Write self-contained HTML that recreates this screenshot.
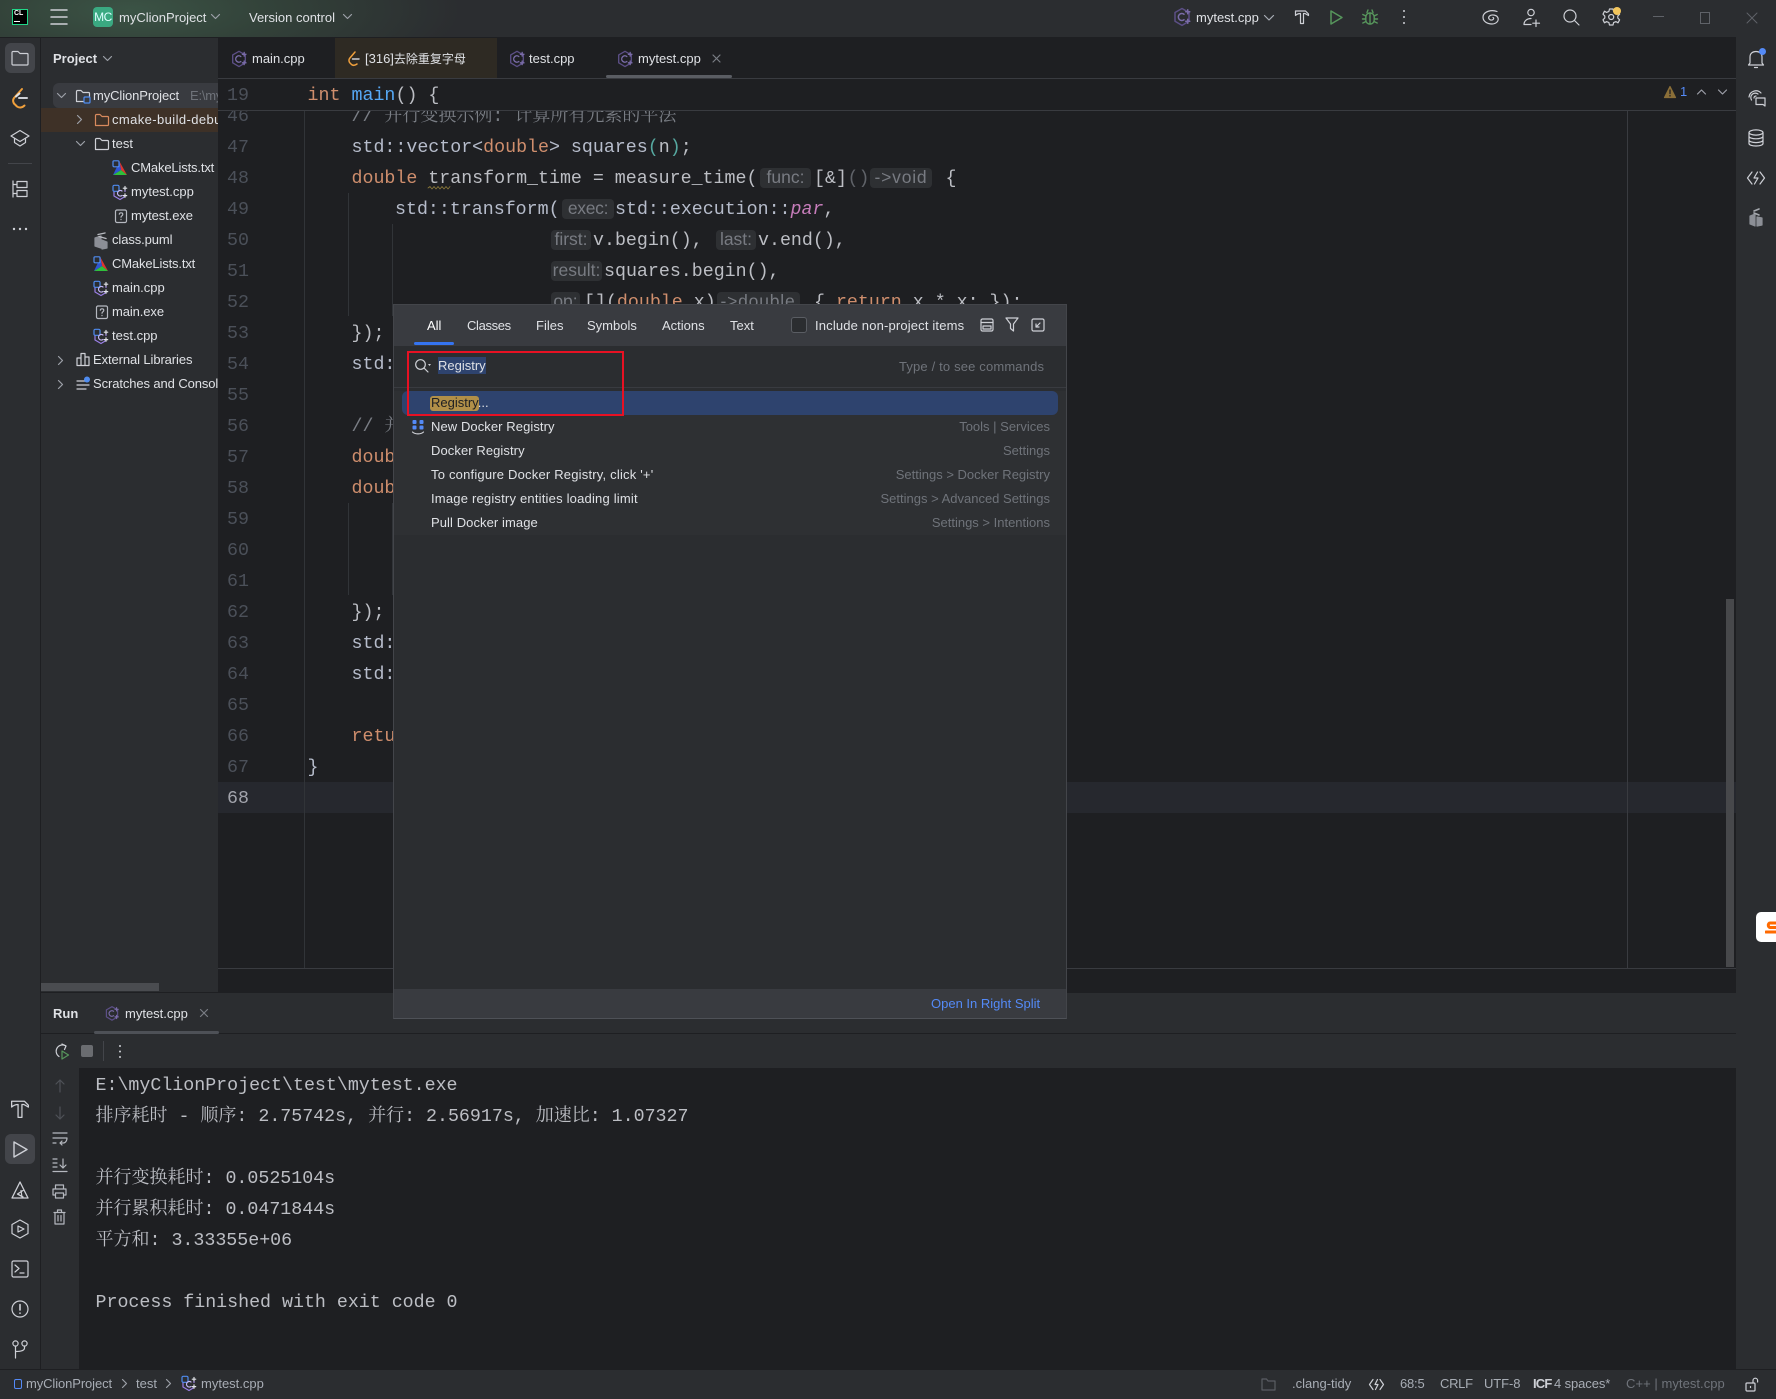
<!DOCTYPE html>
<html lang="en"><head><meta charset="utf-8"><title>myClionProject</title>
<style>
*{box-sizing:border-box}
html,body{margin:0;padding:0;width:1776px;height:1399px;overflow:hidden;background:#1e1f22}
body{position:relative;font:13px "Liberation Sans","Noto Sans CJK SC",sans-serif;color:#dfe1e5}
.b{position:absolute}
.t{position:absolute;white-space:pre;line-height:20px;height:20px}
svg{position:absolute;overflow:visible;fill:none;stroke:#ced0d6;stroke-width:1.2;stroke-linecap:round;stroke-linejoin:round}
.n,.c,pre{font-family:"Liberation Mono","Noto Serif CJK SC",monospace;font-size:18.3px}
.n{position:absolute;left:227px;height:31px;line-height:31px;color:#4b5059;margin-top:2px}
.c{position:absolute;white-space:pre;height:31px;line-height:31px;color:#b6bccb;margin-top:2px}
.k{color:#cf8e6d}.f{color:#56a8f5}.m{color:#7a7e85}.p{color:#bcbec4}
.z{font-size:18px}
.h{position:absolute;height:20px;text-align:center;background:#2e3033;border-radius:4px;color:#787b82;font:17.5px/19px "Liberation Sans",sans-serif;white-space:pre;z-index:1;overflow:hidden}
.r{position:absolute;left:431px;white-space:pre;line-height:20px;color:#dfe1e5;letter-spacing:.08px}
.q{position:absolute;left:700px;width:350px;text-align:right;white-space:pre;line-height:20px;color:#6f737a}
.tab{position:absolute;top:316px;line-height:20px;color:#dfe1e5}
.g{color:#6f737a}.d{color:#a8adb5}
</style></head><body>
<svg width="0" height="0" style="position:absolute"><defs>
<symbol id="cpp" viewBox="0 0 16 16"><path d="M8 1.2 13.6 4.4V11.4L8 14.7 2.4 11.4V4.4Z" stroke="#5c4f86"/><path d="M9.6 5.8A2.8 2.8 0 1 0 9.6 10.2" stroke="#7a6ca8"/><path d="M12.6 2.2v3.2M11 3.8h3.2M12.6 9.8V13M11 11.4h3.2" stroke="#7a6ca8"/></symbol>
<symbol id="cppm" viewBox="0 0 16 16"><path d="M2 7V11.5L8 15 13 12M13 7V5" stroke="#9a7fe6"/><rect x="1" y=".8" width="6" height="6" rx="1.2" stroke="#4f8cf0" fill="none"/><path d="M10 6.5A2.8 2.8 0 1 0 10 11" stroke="#c5b7f5"/><path d="M13 2v3.4M11.3 3.7h3.4M13 9.4v3.4M11.3 11.1h3.4" stroke="#dfe1e5"/></symbol>
<symbol id="cm" viewBox="0 0 16 16"><path d="M7.5 1.5 15 15 9 10Z" fill="#e0342e" stroke="none"/><path d="M1 15 9 10 15 15Z" fill="#2fbf3c" stroke="none"/><path d="M7.5 1.5 9 10 1 15Z" fill="#2f55d4" stroke="none"/><rect x="1" y=".8" width="6" height="6" rx="1" stroke="#4f8cf0" fill="#2b2d30"/></symbol>
<symbol id="exe" viewBox="0 0 16 16"><rect x="2.5" y="2" width="11" height="12.5" rx="1.5" stroke="#b5b8bf"/><path d="M6.3 6.2C6.5 4.3 9.8 4.4 9.8 6.3 9.8 7.8 8 7.8 8 9.2M8 11.3v.3" stroke="#b5b8bf"/></symbol>
<symbol id="fold" viewBox="0 0 16 16"><path d="M1.5 13.5V3.5a1 1 0 0 1 1-1H6L8 4.5H13.5a1 1 0 0 1 1 1V12.5a1 1 0 0 1-1 1Z"/></symbol>
</defs></svg>

<!-- Title bar -->
<div class="b" style="left:0;top:0;width:1776px;height:37px;background:#2b2d30"></div>
<div class="b" style="left:0;top:0;width:620px;height:37px;background:radial-gradient(ellipse 330px 90px at 130px 10px,#3b5345 0%,#33433a 40%,rgba(43,45,48,0) 100%)"></div>
<div class="b" style="left:12px;top:9px;width:16px;height:16px;background:#000;border:1px solid #21d789"></div>
<div class="t" style="left:14px;top:6px;font:bold 7px/16px 'Liberation Sans';color:#fff;height:16px">CL</div>
<div class="b" style="left:14px;top:21px;width:6px;height:1px;background:#fff"></div>
<svg style="left:51px;top:7px" width="16" height="20"><path d="M0 3H16M0 10H16M0 17H16" stroke="#ced0d6" stroke-width="1.5"/></svg>
<div class="b" style="left:93px;top:7px;width:20px;height:20px;border-radius:4px;background:#3aa981;color:#dff;font:12px/20px 'Liberation Sans';text-align:center;letter-spacing:-.4px">MC</div>
<div class="t" style="left:119px;top:8px;color:#dfe1e5">myClionProject</div>
<svg style="left:211px;top:14px" width="9" height="6"><path d="M.5 .5 4.5 4.5 8.5 .5" stroke="#9da0a8"/></svg>
<div class="t" style="left:249px;top:8px;color:#dfe1e5">Version control</div>
<svg style="left:343px;top:14px" width="9" height="6"><path d="M.5 .5 4.5 4.5 8.5 .5" stroke="#9da0a8"/></svg>
<svg style="left:1172px;top:7px" width="20" height="20"><use href="#cpp"/></svg>
<div class="t" style="left:1196px;top:8px;color:#dfe1e5">mytest.cpp</div>
<svg style="left:1264px;top:15px" width="10" height="6"><path d="M.5 .5 5 5 9.5 .5" stroke="#a8adb5"/></svg>
<svg style="left:1295px;top:10px" width="14" height="14"><path d="M.5 1H10.5L13.5 4V5.5L10 3.5H8.5V13.5H5.5V3.5C3.5 3.5 2 4 .5 5.5Z"/></svg>
<svg style="left:1330px;top:10px" width="13" height="15"><path d="M1 1 12 7.5 1 14Z" stroke="#57965c" stroke-width="1.5"/></svg>
<svg style="left:1362px;top:9px" width="16" height="16"><g stroke="#57965c" stroke-width="1.4"><rect x="3.8" y="4" width="8.4" height="11" rx="4"/><path d="M8 4V15M5 3.5 6 1M11 3.5 10 1M.8 5.5 3.8 7M15.2 5.5 12.2 7M.5 10H3.5M15.5 10H12.5M.8 14 4 12.5M15.2 14 12 12.5"/></g></svg>
<svg style="left:1402px;top:9px" width="4" height="16"><circle cx="2" cy="2" r="1" fill="#ced0d6" stroke="none"/><circle cx="2" cy="8" r="1" fill="#ced0d6" stroke="none"/><circle cx="2" cy="14" r="1" fill="#ced0d6" stroke="none"/></svg>
<svg style="left:1482px;top:9px" width="18" height="16" stroke-width="1.4"><path d="M15 2.5C10 .5 1.5 2 1 8 1 13 6 15 10 15 14 15 17 12 16 9 15 6 10 5 7.5 7 5.5 9 7.5 11.5 10 11 12 10.5 12 9 11 8.5"/></svg>
<svg style="left:1523px;top:8px" width="18" height="19"><circle cx="8" cy="4.5" r="3.2"/><path d="M1 16.5C1 13 4 10.5 8 10.5M1 16.5H8M13 12V18.5M9.8 15.2H16.5"/></svg>
<svg style="left:1563px;top:9px" width="17" height="17" stroke-width="1.3"><circle cx="7" cy="7" r="6"/><path d="M11.5 11.5 16 16"/></svg>
<svg style="left:1603px;top:8px" width="18" height="18"><path d="M6.5 1H10L10.6 3.4 13 4.4 15 3.2 16.6 6.2 14.8 8 14.8 10 16.6 11.8 15 14.8 13 13.6 10.6 14.6 10 17H6.5L5.9 14.6 3.5 13.6 1.5 14.8 0 11.8 1.8 10 1.8 8 0 6.2 1.5 3.2 3.5 4.4 5.9 3.4Z"/><circle cx="8.2" cy="9" r="2.5"/></svg>
<div class="b" style="left:1613px;top:7px;width:8px;height:8px;border-radius:50%;background:#f2c55c"></div>
<div class="b" style="left:1653px;top:16px;width:11px;height:1px;background:#5f6268"></div>
<div class="b" style="left:1700px;top:12px;width:10px;height:12px;border:1px solid #5f6268"></div>
<svg style="left:1746px;top:12px" width="12" height="12"><path d="M1 1 11 11M11 1 1 11" stroke="#5f6268" stroke-width="1"/></svg>

<!-- Left strip + project panel -->
<div class="b" style="left:0;top:37px;width:41px;height:1332px;background:#2b2d30;border-right:1px solid #1e1f22"></div>
<div class="b" style="left:41px;top:37px;width:177px;height:955px;background:#2b2d30"></div>
<div class="b" style="left:0;top:37px;width:1776px;height:1px;background:#1e1f22"></div>
<div class="b" style="left:5px;top:43px;width:30px;height:30px;border-radius:6px;background:#43454a"></div>
<svg style="left:11px;top:50px" width="18" height="16" stroke-width="1.3"><path d="M1 14V2.5A1 1 0 0 1 2 1.5H7L9 3.5H16A1 1 0 0 1 17 4.5V14A1 1 0 0 1 16 15H2A1 1 0 0 1 1 14Z"/></svg>
<svg style="left:12px;top:88px" width="17" height="20"><path d="M10 1 2 10C.5 12 1 15 3 16.5L5 18.5C7 20 10 20 12.5 17.5" stroke="#f0a03c" stroke-width="2"/><path d="M7 10H15" stroke="#ced0d6" stroke-width="2"/><path d="M4 8.5 7.5 5.5" stroke="#dfe1e5" stroke-width="2"/></svg>
<svg style="left:10px;top:129px" width="20" height="18"><path d="M10 1.5 19 7 10 12.5 1 7ZM4.5 9.5V13.5L10 17 15.5 13.5V9.5"/></svg>
<div class="b" style="left:8px;top:163px;width:24px;height:1px;background:#43454a"></div>
<svg style="left:12px;top:180px" width="16" height="18"><path d="M1 1V17M5 1.5H15V7.5H5ZM5 10.5H15V16.5H5ZM1 4.5H5M1 13.5H5"/></svg>
<svg style="left:12px;top:227px" width="16" height="4"><circle cx="2" cy="2" r="1.2" fill="#ced0d6" stroke="none"/><circle cx="8" cy="2" r="1.2" fill="#ced0d6" stroke="none"/><circle cx="14" cy="2" r="1.2" fill="#ced0d6" stroke="none"/></svg>

<svg style="left:11px;top:1100px" width="18" height="18" viewBox="0 0 14 14"><path d="M.5 1H10.5L13.5 4V5.5L10 3.5H8.5V13.5H5.5V3.5C3.5 3.5 2 4 .5 5.5Z" stroke-width="1"/></svg>
<div class="b" style="left:5px;top:1134px;width:30px;height:30px;border-radius:6px;background:#43454a"></div>
<svg style="left:13px;top:1141px" width="15" height="17"><path d="M1 1 14 8.5 1 16Z" stroke-width="1.4"/></svg>
<svg style="left:11px;top:1181px" width="18" height="18"><path d="M9 1 17 17H1ZM12 9.5 6.5 13 12 16" stroke-width="1.3"/><path d="M10 9.5 11 16" /></svg>
<svg style="left:11px;top:1219px" width="18" height="20"><path d="M9 1 17 5.5V14.5L9 19 1 14.5V5.5Z"/><path d="M7 7 13 10 7 13Z"/></svg>
<svg style="left:11px;top:1260px" width="18" height="18"><rect x="1" y="1" width="16" height="16" rx="1.5"/><path d="M4 5 8 8.5 4 12M9 13H13"/></svg>
<svg style="left:11px;top:1300px" width="18" height="18"><circle cx="9" cy="9" r="8"/><path d="M9 4.5V10M9 13V13.3" stroke-width="1.6"/></svg>
<svg style="left:12px;top:1340px" width="16" height="19"><circle cx="3.5" cy="3.5" r="2.6"/><circle cx="12.5" cy="3.5" r="2.6"/><path d="M3.5 6V18M12.5 6V8C12.5 10 10 11.5 3.5 11.5"/></svg>

<!-- Project panel content -->
<div class="t" style="left:53px;top:49px;font-weight:bold;color:#dfe1e5">Project</div>
<svg style="left:103px;top:56px" width="9" height="6"><path d="M.5 .5 4.5 4.5 8.5 .5" stroke="#9da0a8"/></svg>
<div class="b" style="left:53px;top:83px;width:165px;height:25px;background:#393b40;border-radius:6px 0 0 6px"></div>
<div class="b" style="left:41px;top:108px;width:177px;height:24px;background:#3e3127"></div>
<div class="b" style="left:41px;top:84px;width:177px;height:310px;overflow:hidden">
<div class="t" style="left:52px;top:2px;color:#dfe1e5;letter-spacing:-.1px">myClionProject</div>
<div class="t" style="left:149px;top:2px;color:#6f737a;letter-spacing:-.2px">E:\myClionProject</div>
<div class="t" style="left:71px;top:26px;letter-spacing:.4px">cmake-build-debug</div>
<div class="t" style="left:71px;top:50px">test</div>
<div class="t" style="left:90px;top:74px;letter-spacing:-.15px">CMakeLists.txt</div>
<div class="t" style="left:90px;top:98px">mytest.cpp</div>
<div class="t" style="left:90px;top:122px;letter-spacing:-.1px">mytest.exe</div>
<div class="t" style="left:71px;top:146px;letter-spacing:-.1px">class.puml</div>
<div class="t" style="left:71px;top:170px;letter-spacing:-.15px">CMakeLists.txt</div>
<div class="t" style="left:71px;top:194px">main.cpp</div>
<div class="t" style="left:71px;top:218px;letter-spacing:-.1px">main.exe</div>
<div class="t" style="left:71px;top:242px">test.cpp</div>
<div class="t" style="left:52px;top:266px;letter-spacing:-.1px">External Libraries</div>
<div class="t" style="left:52px;top:290px;letter-spacing:-.1px">Scratches and Consoles</div>
</div>
<!-- tree chevrons and icons -->
<svg style="left:57px;top:93px" width="9" height="6"><path d="M.5 .5 4.5 4.5 8.5 .5" stroke="#9da0a8"/></svg>
<svg style="left:77px;top:115px" width="6" height="9"><path d="M.5 .5 4.5 4.5 .5 8.5" stroke="#9da0a8"/></svg>
<svg style="left:76px;top:141px" width="9" height="6"><path d="M.5 .5 4.5 4.5 8.5 .5" stroke="#9da0a8"/></svg>
<svg style="left:58px;top:356px" width="6" height="9"><path d="M.5 .5 4.5 4.5 .5 8.5" stroke="#9da0a8"/></svg>
<svg style="left:58px;top:380px" width="6" height="9"><path d="M.5 .5 4.5 4.5 .5 8.5" stroke="#9da0a8"/></svg>
<svg style="left:75px;top:88px" width="16" height="16"><use href="#fold"/><rect x="9" y="9" width="6" height="6" rx="1" stroke="#4f8cf0" fill="#393b40"/></svg>
<svg style="left:94px;top:112px" width="16" height="16"><path d="M1.5 13.5V3.5a1 1 0 0 1 1-1H6L8 4.5H13.5a1 1 0 0 1 1 1V12.5a1 1 0 0 1-1 1Z" stroke="#d98a5d"/></svg>
<svg style="left:94px;top:136px" width="16" height="16"><use href="#fold"/></svg>
<svg style="left:112px;top:160px" width="16" height="16"><use href="#cm"/></svg>
<svg style="left:112px;top:184px" width="16" height="17"><use href="#cppm"/></svg>
<svg style="left:113px;top:208px" width="16" height="16"><use href="#exe"/></svg>
<svg style="left:94px;top:232px" width="15" height="18"><path d="M1 6 7 4 7 16 1 14ZM8 8 13 10V16L8 17Z" fill="#8c8f96" stroke="#8c8f96"/><path d="M4 2.5 11 1M5 4.5 12 6.5" stroke="#b8bac0" stroke-width="1.4"/></svg>
<svg style="left:93px;top:256px" width="16" height="16"><use href="#cm"/></svg>
<svg style="left:93px;top:280px" width="16" height="17"><use href="#cppm"/></svg>
<svg style="left:94px;top:304px" width="16" height="16"><use href="#exe"/></svg>
<svg style="left:93px;top:328px" width="16" height="17"><use href="#cppm"/></svg>
<svg style="left:76px;top:352px" width="14" height="14"><path d="M1 13.5V6H5V13.5ZM5 13.5V1.5H9V13.5ZM9 13.5V5H13V13.5Z"/></svg>
<svg style="left:76px;top:376px" width="16" height="15"><path d="M1 5H9M1 9H13M1 13H10"/><circle cx="11" cy="3.5" r="3" fill="#4f8cf0" stroke="none"/></svg>
<div class="b" style="left:41px;top:983px;width:118px;height:8px;background:#4a4c50"></div>

<!-- Editor code (behind the tab bar) -->
<div class="b" style="left:218px;top:782px;width:1518px;height:31px;background:#26282e"></div>
<div class="b" style="left:304px;top:110px;width:1px;height:858px;background:#313438"></div>
<div class="b" style="left:1627px;top:110px;width:1px;height:858px;background:#393b40"></div>
<div class="b" style="left:348px;top:193px;width:1px;height:123px;background:#313438"></div>
<div class="b" style="left:392px;top:224px;width:1px;height:92px;background:#313438"></div>
<div class="b" style="left:348px;top:503px;width:1px;height:92px;background:#313438"></div>
<div class="b" style="left:392px;top:503px;width:1px;height:92px;background:#313438"></div>

<div class="n" style="top:100px">46</div><div class="n" style="top:131px">47</div><div class="n" style="top:162px">48</div><div class="n" style="top:193px">49</div><div class="n" style="top:224px">50</div><div class="n" style="top:255px">51</div><div class="n" style="top:286px">52</div><div class="n" style="top:317px">53</div><div class="n" style="top:348px">54</div><div class="n" style="top:379px">55</div><div class="n" style="top:410px">56</div><div class="n" style="top:441px">57</div><div class="n" style="top:472px">58</div><div class="n" style="top:503px">59</div><div class="n" style="top:534px">60</div><div class="n" style="top:565px">61</div><div class="n" style="top:596px">62</div><div class="n" style="top:627px">63</div><div class="n" style="top:658px">64</div><div class="n" style="top:689px">65</div><div class="n" style="top:720px">66</div><div class="n" style="top:751px">67</div><div class="n" style="top:782px;color:#a1a3ab">68</div>

<div class="c m" style="left:351.5px;top:100px">// <span class="z">并行变换示例</span>: <span class="z">计算所有元素的平法</span></div>
<div class="c" style="left:351.5px;top:131px">std::vector&lt;<span class="k">double</span>&gt; squares<span style="color:#56a8a0">(</span><span class="p">n</span><span style="color:#56a8a0">)</span><span class="p">;</span></div>
<div class="c p" style="left:351.5px;top:162px"><span class="k">double</span> transform_time = measure_time(</div>
<svg style="left:428px;top:186px" width="24" height="4"><path d="M0 2 2 .5 4 3 6 .5 8 3 10 .5 12 3 14 .5 16 3 18 .5 20 3 22 .5" stroke="#8c7a3a" stroke-width=".8"/></svg>
<div class="h" style="left:760px;top:168px;width:51px">func:</div>
<div class="c p" style="left:814px;top:162px">[&amp;]</div>
<div class="c" style="left:847.5px;top:162px;color:#5f6268">()</div>
<div class="h" style="left:870px;top:168px;width:62px;letter-spacing:.8px">-&gt;void</div>
<div class="c p" style="left:945.5px;top:162px">{</div>
<div class="c" style="left:395px;top:193px">std::transform(</div>
<div class="h" style="left:562px;top:199px;width:52px;letter-spacing:-.3px">exec:</div>
<div class="c" style="left:615px;top:193px">std::execution::<i style="color:#c77dbb">par</i><span class="p">,</span></div>
<div class="h" style="left:551px;top:230px;width:40px">first:</div>
<div class="c p" style="left:593px;top:224px">v.begin(),</div>
<div class="h" style="left:716px;top:230px;width:40px">last:</div>
<div class="c p" style="left:758px;top:224px">v.end(),</div>
<div class="h" style="left:551px;top:261px;width:51px">result:</div>
<div class="c p" style="left:604px;top:255px">squares.begin(),</div>
<div class="h" style="left:551px;top:292px;width:29px">op:</div>
<div class="c p" style="left:584px;top:286px">[](<span class="k">double</span> x)</div>
<div class="h" style="left:716.5px;top:292px;width:83px;letter-spacing:.8px">-&gt;double</div>
<div class="c p" style="left:814px;top:286px">{ <span class="k">return</span> x * x; });</div>
<div class="c p" style="left:351.5px;top:317px">});</div>
<div class="c" style="left:351.5px;top:348px">std::</div>
<div class="c m" style="left:351.5px;top:410px">// <span class="z">并</span></div>
<div class="c k" style="left:351.5px;top:441px">double</div>
<div class="c k" style="left:351.5px;top:472px">double</div>
<div class="c p" style="left:351.5px;top:596px">});</div>
<div class="c" style="left:351.5px;top:627px">std::</div>
<div class="c" style="left:351.5px;top:658px">std::</div>
<div class="c k" style="left:351.5px;top:720px">return</div>
<div class="c" style="left:307.5px;top:751px">}</div>

<!-- scrollbar -->
<div class="b" style="left:1726px;top:599px;width:8px;height:368px;background:#47484b"></div>
<div class="b" style="left:218px;top:968px;width:1518px;height:1px;background:#393b40"></div>

<!-- Tab bar + sticky -->
<div class="b" style="left:218px;top:38px;width:1518px;height:72px;background:#1e1f22"></div>
<div class="b" style="left:335px;top:38px;width:162px;height:40px;background:#2e2a23"></div>
<div class="b" style="left:218px;top:78px;width:1518px;height:1px;background:#393b40"></div>
<div class="b" style="left:218px;top:110px;width:1518px;height:1px;background:#393b40"></div>
<svg style="left:230px;top:50px" width="18" height="18"><use href="#cpp"/></svg>
<div class="t" style="left:252px;top:49px">main.cpp</div>
<svg style="left:348px;top:51px" width="12" height="16"><path d="M7 1 1.5 7.5C.5 9 1 11 2 12L3.5 13.5C5 14.7 7 14.5 9 13" stroke="#f0a03c" stroke-width="1.5"/><path d="M4.5 8H11" stroke="#ced0d6" stroke-width="1.4"/></svg>
<div class="t" style="left:365px;top:49px">[316]<span style="font-size:12px">去除重复字母</span></div>
<svg style="left:508px;top:50px" width="18" height="18"><use href="#cpp"/></svg>
<div class="t" style="left:529px;top:49px">test.cpp</div>
<svg style="left:616px;top:50px" width="18" height="18"><use href="#cpp"/></svg>
<div class="t" style="left:638px;top:49px">mytest.cpp</div>
<svg style="left:712px;top:54px" width="9" height="9"><path d="M1 1 8 8M8 1 1 8" stroke="#7a7d84"/></svg>
<div class="b" style="left:606px;top:75px;width:126px;height:3px;background:#5a5d63;border-radius:2px"></div>
<div class="n" style="top:79px">19</div>
<div class="c k" style="left:307.5px;top:79px">int</div>
<div class="c f" style="left:351.5px;top:79px">main</div>
<div class="c p" style="left:395.5px;top:79px">() {</div>
<svg style="left:1664px;top:86px" width="12" height="12"><path d="M6 .5 11.5 11.5H.5Z" fill="#8a6e38" stroke="#8a6e38"/><path d="M6 4V7.5M6 9.5V10" stroke="#1e1f22" stroke-width="1.3"/></svg>
<div class="t" style="left:1680px;top:82px;color:#548af7">1</div>
<svg style="left:1697px;top:89px" width="9" height="6"><path d="M.5 5 4.5 1 8.5 5" stroke="#9da0a8"/></svg>
<svg style="left:1718px;top:89px" width="9" height="6"><path d="M.5 1 4.5 5 8.5 1" stroke="#9da0a8"/></svg>

<!-- Right strip -->
<div class="b" style="left:1736px;top:37px;width:40px;height:1332px;background:#2b2d30"></div>
<svg style="left:1747px;top:49px" width="18" height="20"><path d="M3 14V8C3 4.5 5.5 2.5 9 2.5 12.5 2.5 15 4.5 15 8V14L16.5 16H1.5ZM7.5 18.5H10.5"/></svg>
<div class="b" style="left:1759px;top:48px;width:7px;height:7px;border-radius:50%;background:#548af7"></div>
<svg style="left:1747px;top:89px" width="19" height="19"><path d="M2 8A7 7 0 0 1 14 4M4.5 11A4.5 4.5 0 0 1 11 5M7 9A2 2 0 0 1 9 7"/><path d="M9 9H18V17L16 15.5H9Z"/></svg>
<svg style="left:1748px;top:129px" width="16" height="18"><ellipse cx="8" cy="3.5" rx="7" ry="2.6"/><path d="M1 3.5V14.5C1 16 4 17 8 17S15 16 15 14.5V3.5M1 7.2C1 8.7 4 9.8 8 9.8S15 8.7 15 7.2M1 11C1 12.5 4 13.6 8 13.6S15 12.5 15 11"/></svg>
<svg style="left:1746px;top:170px" width="20" height="16" stroke-width="2"><path d="M6 2 1.5 8 6 14M14 2 18.5 8 14 14M11.5 2 8 8H12L8.5 14"/></svg>
<svg style="left:1748px;top:208px" width="16" height="20"><path d="M2 8 7 6V18L2 16ZM9 9 14 10V17L9 18Z" fill="#8c8f96" stroke="#8c8f96"/><path d="M6 3 11 1M6 5 11 7" stroke="#a5a8ae" stroke-width="1.6"/></svg>
<div class="b" style="left:1756px;top:912px;width:20px;height:30px;background:#fff;border-radius:5px 0 0 5px"></div>
<svg style="left:1765px;top:920px;overflow:hidden" width="11" height="15"><path d="M11 3H5C3 3 2.5 7 5 7.5H11M1 12H11" stroke="#ff6a00" stroke-width="3"/></svg>

<!-- Run panel -->
<div class="b" style="left:41px;top:992px;width:1695px;height:76px;background:#2b2d30"></div>
<div class="b" style="left:41px;top:992px;width:1695px;height:1px;background:#1e1f22"></div>
<div class="b" style="left:41px;top:1033px;width:1695px;height:1px;background:#1e1f22"></div>
<div class="b" style="left:41px;top:1068px;width:38px;height:301px;background:#2b2d30"></div>
<div class="t" style="left:53px;top:1004px;font-weight:bold">Run</div>
<svg style="left:104px;top:1005px" width="16" height="17"><use href="#cpp"/></svg>
<div class="t" style="left:125px;top:1004px">mytest.cpp</div>
<svg style="left:200px;top:1009px" width="8" height="8"><path d="M.5 .5 7.5 7.5M7.5 .5 .5 7.5" stroke="#7a7d84"/></svg>
<div class="b" style="left:94px;top:1031px;width:125px;height:3px;background:#4e5157;border-radius:2px"></div>
<svg style="left:54px;top:1043px" width="16" height="17"><path d="M12 3A6 6 0 1 0 5 13.5"/><path d="M8 1 12 3 10.5 6.5"/><path d="M8 8 14.5 12 8 16Z" stroke="#57965c"/></svg>
<div class="b" style="left:81px;top:1045px;width:12px;height:12px;border-radius:2px;background:#6a6c70"></div>
<div class="b" style="left:103px;top:1041px;width:1px;height:20px;background:#43454a"></div>
<svg style="left:118px;top:1044px" width="4" height="16"><circle cx="2" cy="2" r="1" fill="#ced0d6" stroke="none"/><circle cx="2" cy="7.5" r="1" fill="#ced0d6" stroke="none"/><circle cx="2" cy="13" r="1" fill="#ced0d6" stroke="none"/></svg>
<svg style="left:55px;top:1079px" width="10" height="14"><path d="M5 13V1M1 5 5 1 9 5" stroke="#4e5157"/></svg>
<svg style="left:55px;top:1106px" width="10" height="14"><path d="M5 1V13M1 9 5 13 9 9" stroke="#4e5157"/></svg>
<svg style="left:52px;top:1132px" width="16" height="14"><path d="M1 1H15M1 6H15C15 6 15 11 11 11H8M10 9 8 11 10 13M1 11H4" stroke="#b5b8bf"/></svg>
<svg style="left:52px;top:1158px" width="16" height="14"><path d="M1 1H5M1 5H5M1 9H5M1 13.5H15M11 1V10M8 7 11 10 14 7" stroke="#b5b8bf"/></svg>
<svg style="left:52px;top:1184px" width="15" height="15"><path d="M3.5 5V1H11.5V5M3.5 11H1V5H14V11H11.5M3.5 9H11.5V14H3.5Z" stroke="#b5b8bf"/></svg>
<svg style="left:53px;top:1209px" width="13" height="16"><path d="M1 3.5H12M4.5 3.5V1H8.5V3.5M2 3.5V15H11V3.5M5 6.5V12M8 6.5V12" stroke="#b5b8bf"/></svg>

<!-- Console -->
<pre class="b" style="left:95.5px;top:1071px;margin:0;line-height:31px;color:#bcbec4;z-index:1">E:\myClionProject\test\mytest.exe
<span class="z">排序耗时</span> - <span class="z">顺序</span>: 2.75742s, <span class="z">并行</span>: 2.56917s, <span class="z">加速比</span>: 1.07327

<span class="z">并行变换耗时</span>: 0.0525104s
<span class="z">并行累积耗时</span>: 0.0471844s
<span class="z">平方和</span>: 3.33355e+06

Process finished with exit code 0</pre>

<!-- Search Everywhere popup -->
<div class="b" style="left:393px;top:304px;width:674px;height:715px;background:#2b2d30;border:1px solid #43454a;border-bottom-color:#4e5157;z-index:3"></div>
<div style="position:absolute;left:0;top:0;z-index:4">
<div class="b" style="left:394px;top:305px;width:672px;height:41px;background:#393b40"></div>
<div class="b" style="left:394px;top:989px;width:672px;height:29px;background:#393b40"></div>
<div class="t" style="left:931px;top:994px;color:#548af7">Open In Right Split</div>
<div class="tab" style="left:427px;color:#fff">All</div>
<div class="tab" style="left:467px;letter-spacing:-.35px">Classes</div>
<div class="tab" style="left:536px">Files</div>
<div class="tab" style="left:587px">Symbols</div>
<div class="tab" style="left:662px">Actions</div>
<div class="tab" style="left:730px">Text</div>
<div class="b" style="left:414px;top:342px;width:40px;height:3px;background:#3574f0;border-radius:2px"></div>
<div class="b" style="left:791px;top:317px;width:16px;height:16px;border:1px solid #5a5d63;border-radius:3px;background:#2b2d30"></div>
<div class="t" style="left:815px;top:316px;letter-spacing:.16px">Include non-project items</div>
<svg style="left:980px;top:318px" width="14" height="14"><rect x="1" y="1" width="12" height="12" rx="1.5"/><path d="M1 4.5H13M3 8H11V11H3Z"/></svg>
<svg style="left:1005px;top:317px" width="14" height="15"><path d="M1 1H13L8.5 7V14L5.5 11.5V7Z"/></svg>
<svg style="left:1031px;top:318px" width="14" height="14"><rect x="1" y="1" width="12" height="12" rx="1.5"/><path d="M9 5 5 9M5 6V9H8"/></svg>
<svg style="left:414px;top:358px" width="18" height="16"><circle cx="6.5" cy="6.5" r="4.8"/><path d="M10 10 14 14"/><path d="M14 6 17 6 15.5 8Z" fill="#ced0d6" stroke="none"/></svg>
<div class="b" style="left:438px;top:357px;width:48px;height:17px;background:#2e436e"></div>
<div class="t" style="left:438px;top:356px">Registry</div>
<div class="t" style="left:899px;top:357px;color:#6f737a;letter-spacing:.16px">Type / to see commands</div>
<div class="b" style="left:394px;top:387px;width:672px;height:1px;background:#393b40"></div>
<div class="b" style="left:394px;top:391px;width:672px;height:144px;background:#2e3033"></div>
<div class="b" style="left:402px;top:391px;width:656px;height:24px;background:#2e436e;border-radius:6px"></div>
<div class="b" style="left:430px;top:396px;width:49px;height:15px;background:#b18f48;border-radius:3px"></div>
<div class="r" style="top:393px;letter-spacing:0"><span style="color:#1e1f22">Registry</span>...</div>
<svg style="left:411px;top:419px" width="14" height="16"><rect x="1.5" y="1" width="4" height="4" rx="1" fill="#548af7" stroke="none"/><rect x="8.5" y="1" width="4" height="4" rx="1" fill="#548af7" stroke="none"/><rect x="1.5" y="6.5" width="4" height="4" rx="1" fill="#548af7" stroke="none"/><rect x="8.5" y="6.5" width="4" height="4" rx="1" fill="#548af7" stroke="none"/><path d="M1.5 13C4 15.5 10 15.5 12.5 13"/></svg>
<div class="r" style="top:417px">New Docker Registry</div>
<div class="q" style="top:417px">Tools | Services</div>
<div class="r" style="top:441px">Docker Registry</div>
<div class="q" style="top:441px">Settings</div>
<div class="r" style="top:465px;letter-spacing:.2px">To configure Docker Registry, click '+'</div>
<div class="q" style="top:465px">Settings &gt; Docker Registry</div>
<div class="r" style="top:489px;letter-spacing:.2px">Image registry entities loading limit</div>
<div class="q" style="top:489px">Settings &gt; Advanced Settings</div>
<div class="r" style="top:513px">Pull Docker image</div>
<div class="q" style="top:513px">Settings &gt; Intentions</div>
<div class="b" style="left:407px;top:351px;width:217px;height:65px;border:2px solid #e81123"></div>
</div>

<!-- Status bar -->
<div class="b" style="left:0;top:1369px;width:1776px;height:30px;background:#2b2d30;border-top:1px solid #1e1f22"></div>
<div class="b" style="left:14px;top:1379px;width:8px;height:10px;border:1.5px solid #548af7;border-radius:2px"></div>
<div class="t d" style="left:26px;top:1374px;letter-spacing:-.1px">myClionProject</div>
<svg style="left:122px;top:1379px" width="6" height="9"><path d="M.5 .5 4.5 4.5 .5 8.5" stroke="#9da0a8"/></svg>
<div class="t d" style="left:136px;top:1374px">test</div>
<svg style="left:166px;top:1379px" width="6" height="9"><path d="M.5 .5 4.5 4.5 .5 8.5" stroke="#9da0a8"/></svg>
<svg style="left:181px;top:1375px" width="16" height="17"><use href="#cppm"/></svg>
<div class="t d" style="left:201px;top:1374px">mytest.cpp</div>
<svg style="left:1261px;top:1377px" width="15" height="14"><path d="M1 13V2H5.5L7 4H14V13Z" stroke="#5a5d63"/></svg>
<div class="t d" style="left:1292px;top:1374px">.clang-tidy</div>
<svg style="left:1368px;top:1378px" width="17" height="13" stroke-width="2"><path d="M5 1.5 1.5 6.5 5 11.5M12 1.5 15.5 6.5 12 11.5M9.5 1.5 7 6.5H10L7.5 11.5"/></svg>
<div class="t d" style="left:1400px;top:1374px;letter-spacing:-.2px">68:5</div>
<div class="t d" style="left:1440px;top:1374px;letter-spacing:-.3px">CRLF</div>
<div class="t d" style="left:1484px;top:1374px;letter-spacing:-.1px">UTF-8</div>
<div class="t" style="left:1533px;top:1374px;font-weight:bold;color:#ced0d6;letter-spacing:-.8px">ICF</div>
<div class="t d" style="left:1554px;top:1374px;letter-spacing:-.1px">4 spaces*</div>
<div class="t g" style="left:1626px;top:1374px;letter-spacing:.05px">C++ | mytest.cpp</div>
<svg style="left:1745px;top:1377px" width="14" height="15"><rect x="1" y="6" width="9" height="8" rx="1"/><path d="M8 6V3.5A2.3 2.3 0 0 1 12.6 3.5V5M5.5 9.5V10.5"/></svg>
</body></html>
